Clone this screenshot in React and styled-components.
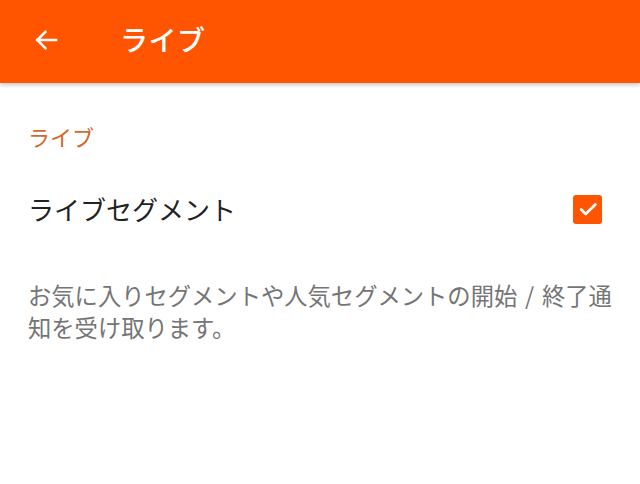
import React from 'react'
import styled, { createGlobalStyle } from 'styled-components';

const GlobalStyle = createGlobalStyle`
  html, body {
    margin: 0;
    padding: 0;
    background: #ffffff;
    font-family: "Noto Sans CJK JP", "Noto Sans", sans-serif;
  }
`

const App = () => {
  return (
    <Page>
      <GlobalStyle />
      <AppBar>
        <BackButton aria-label="back">
          <svg width="30" height="30" viewBox="0 0 24 24" fill="none" stroke="#fff" strokeWidth="2" strokeLinecap="square">
            <path d="M20 12H5" />
            <path d="M11.5 5.5L5 12l6.5 6.5" />
          </svg>
        </BackButton>
        <Title>ライブ</Title>
      </AppBar>

      <Section>
        <SectionTitle>ライブ</SectionTitle>
        <Row>
          <RowLabel>ライブセグメント</RowLabel>
          <CheckBox>
            <svg width="22" height="22" viewBox="0 0 24 24" fill="none" stroke="#fff" strokeWidth="3" strokeLinecap="round" strokeLinejoin="round">
              <path d="M4.5 12.5l5 5L20 7" />
            </svg>
          </CheckBox>
        </Row>
        <Description>
          {'お気に入りセグメントや人気セグメントの開始\u2004/\u2004終了通知を受け取ります。'}
        </Description>
      </Section>
    </Page>
  )
}

const Page = styled.div`
  width: 640px;
  height: 484px;
  background: #ffffff;
  overflow: hidden;
`

const AppBar = styled.header`
  display: flex;
  align-items: center;
  height: 83px;
  background: #ff5500;
  box-shadow: 0 2px 4px rgba(0, 0, 0, 0.22);
  position: relative;
`

const BackButton = styled.div`
  display: flex;
  align-items: center;
  justify-content: center;
  width: 30px;
  height: 30px;
  margin-left: 31px;
  margin-top: -4px;
`

const Title = styled.h1`
  margin: -6px 0 0 59px;
  color: #ffffff;
  font-size: 28px;
  font-weight: 500;
  letter-spacing: 0.5px;
`

const Section = styled.section`
  display: flex;
  flex-direction: column;
  padding: 39px 28px 0 28px;
`

const SectionTitle = styled.div`
  color: #d5682d;
  font-size: 22px;
  line-height: 28px;
`

const Row = styled.div`
  display: flex;
  align-items: center;
  justify-content: space-between;
  margin-top: 42px;
  padding-right: 10px;
`

const RowLabel = styled.div`
  color: #222222;
  font-size: 26px;
  line-height: 34px;
`

const CheckBox = styled.div`
  display: flex;
  align-items: center;
  justify-content: center;
  width: 29px;
  height: 29px;
  border-radius: 3px;
  background: #ff5500;
`

const Description = styled.p`
  margin: 53px -20px 0 0;
  color: #757575;
  font-size: 23.3px;
  line-height: 32px;
`

export default App;
